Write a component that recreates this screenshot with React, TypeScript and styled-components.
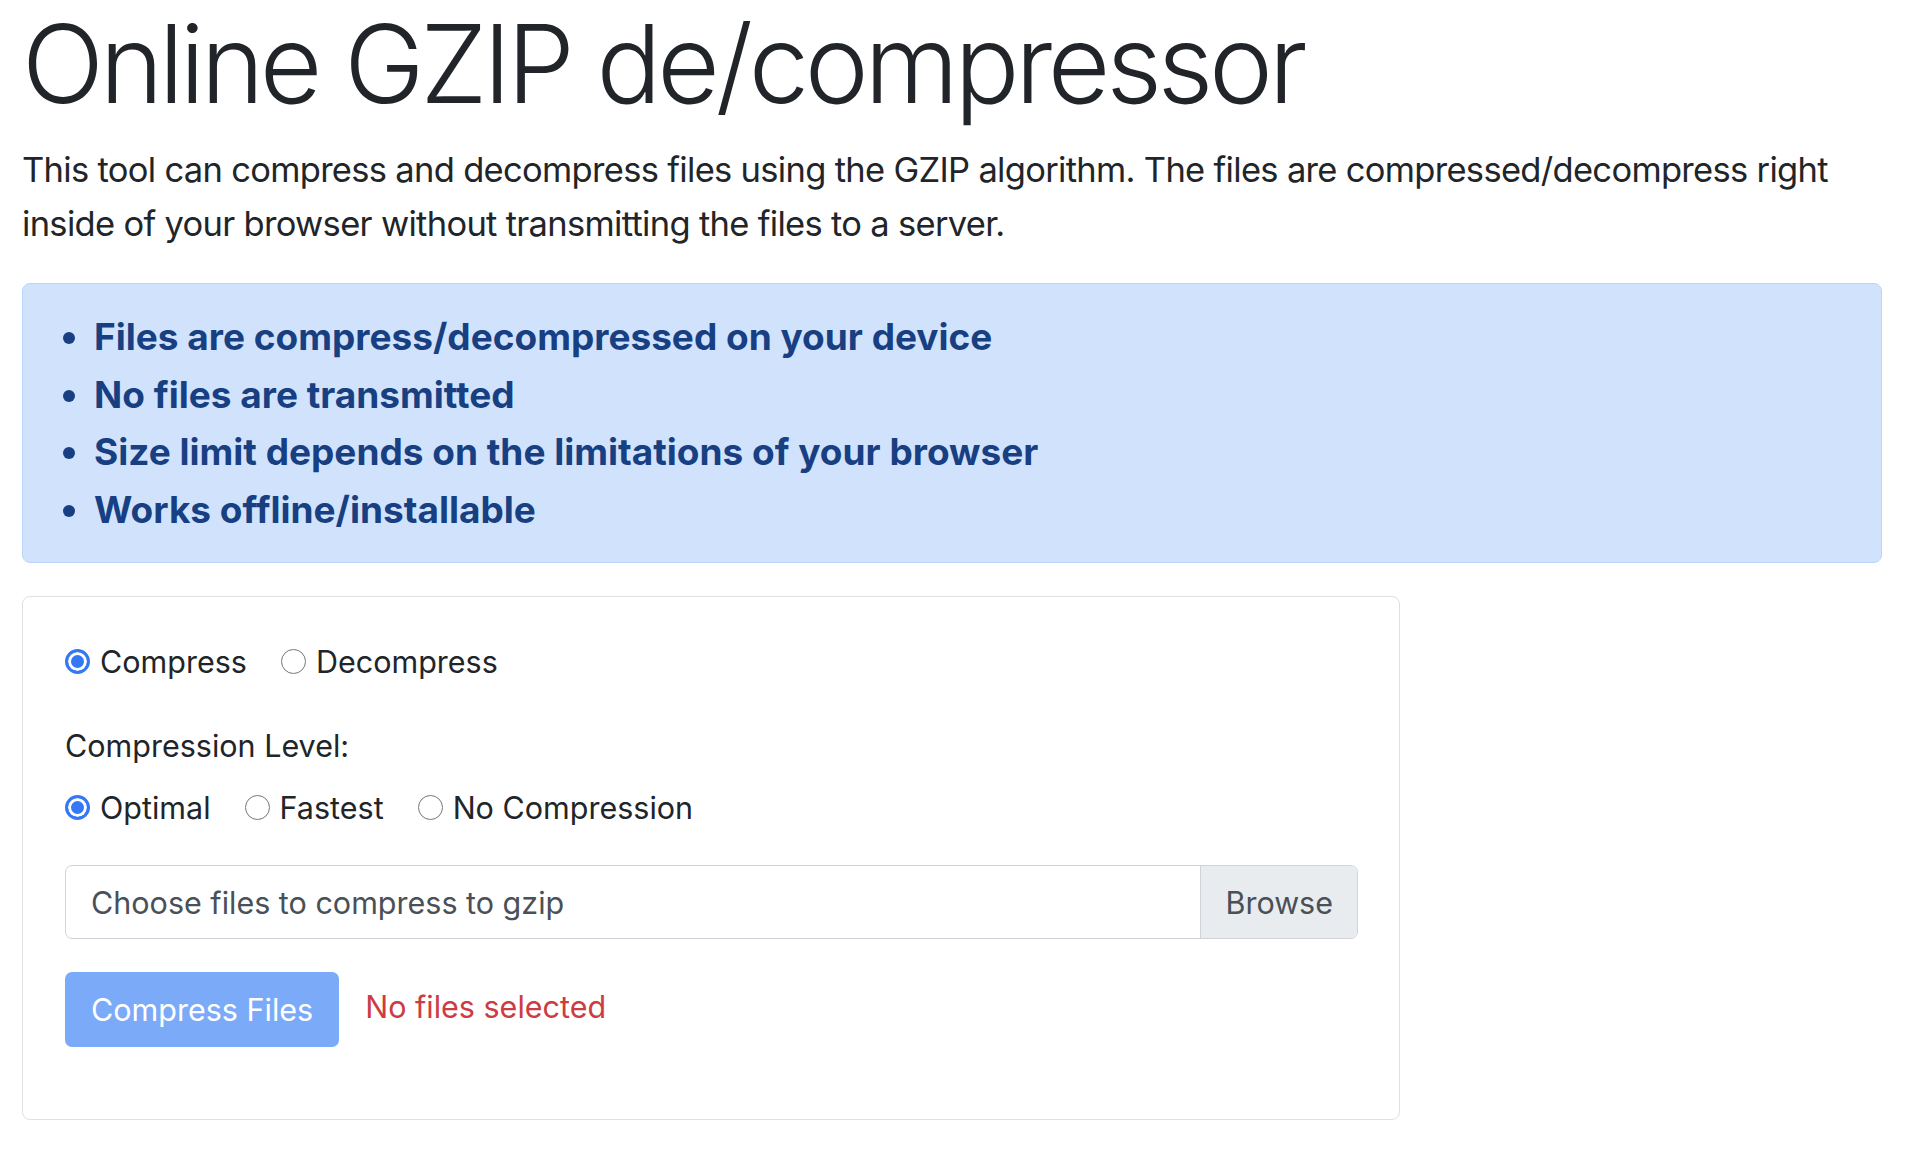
import React, { useState } from "react"
import styled, { createGlobalStyle } from "styled-components"

const GlobalStyle = createGlobalStyle`
	body {
		margin: 0;
		background: #fff;
		color: #212529;
		font-family: Inter, "Noto Sans", sans-serif;
	}
`

const Page = styled.main`
	width: 1860px;
	padding: 0 0 0 22px;
`

const Title = styled.h1`
	margin: -1px 0 0;
	font-size: 108px;
	font-weight: 300;
	line-height: 130px;
	letter-spacing: -0.04em;
`

const Lead = styled.p`
	margin: 14px 0 32px;
	font-size: 34.5px;
	line-height: 54px;
	letter-spacing: -0.02em;
`

const Alert = styled.div`
	box-sizing: border-box;
	padding: 24px 0;
	background: #d1e3fc;
	border: 1px solid #b9d5fb;
	border-radius: 8px;
	color: #173f82;
`

const FeatureList = styled.ul`
	margin: 0;
	padding-left: 71px;

	& > li {
		font-size: 37px;
		font-weight: 700;
		line-height: 57.5px;
	}
`

const Card = styled.section`
	box-sizing: border-box;
	width: 1378px;
	margin-top: 33px;
	padding: 43px 41px 72px 42px;
	border: 1px solid #dfe0e1;
	border-radius: 8px;
`

const RadioRow = styled.div<{ $gapTop?: number }>`
	display: flex;
	align-items: center;
	gap: 34px;
	height: 43px;
	margin-top: ${p => p.$gapTop ?? 0}px;
`

const Option = styled.label`
	display: flex;
	align-items: center;
	gap: 10px;
	font-size: 30.5px;
	cursor: pointer;
`

const Radio = styled.input.attrs({ type: "radio" })`
	appearance: none;
	box-sizing: border-box;
	width: 25px;
	height: 25px;
	margin: 0;
	border: 1.5px solid #777;
	border-radius: 50%;
	background: #fff;

	&:checked {
		border: 3px solid #3478f6;
		background: #3478f6;
		box-shadow: inset 0 0 0 3px #fff;
	}
`

const FieldLabel = styled.div`
	margin-top: 41px;
	font-size: 30.5px;
	line-height: 43px;
`

const FilePicker = styled.label`
	display: flex;
	height: 74px;
	margin-top: 36px;
	box-sizing: border-box;
	border: 1px solid #ced4da;
	border-radius: 7px;
	overflow: hidden;
	font-size: 30.5px;
	color: #495057;
	cursor: pointer;
`

const FileText = styled.span`
	flex: 1;
	display: flex;
	align-items: center;
	padding-left: 25px;
`

const Browse = styled.span`
	display: flex;
	align-items: center;
	padding: 0 24px;
	background: #e9ecef;
	border-left: 1px solid #ced4da;
`

const ActionRow = styled.div`
	display: flex;
	align-items: center;
	gap: 26px;
	margin-top: 33px;
`

const SubmitButton = styled.button`
	height: 75px;
	padding: 0 26px;
	border: none;
	border-radius: 7px;
	background: #7aaaf8;
	color: #fff;
	font-family: inherit;
	font-size: 30.5px;
`

const Status = styled.span`
	margin-top: -6px;
	color: #cd3b43;
	font-size: 30.5px;
`

export default function App() {
	const [mode, setMode] = useState("compress")
	const [level, setLevel] = useState("optimal")

	return (
		<Page>
			<GlobalStyle />
			<Title>Online GZIP de/compressor</Title>
			<Lead>
				This tool can compress and decompress files using the GZIP
				algorithm. The files are compressed/decompress right inside of
				your browser without transmitting the files to a server.
			</Lead>
			<Alert>
				<FeatureList>
					<li>Files are compress/decompressed on your device</li>
					<li>No files are transmitted</li>
					<li>Size limit depends on the limitations of your browser</li>
					<li>Works offline/installable</li>
				</FeatureList>
			</Alert>
			<Card>
				<RadioRow>
					<Option>
						<Radio
							name="mode"
							checked={mode === "compress"}
							onChange={() => setMode("compress")}
						/>
						Compress
					</Option>
					<Option>
						<Radio
							name="mode"
							checked={mode === "decompress"}
							onChange={() => setMode("decompress")}
						/>
						Decompress
					</Option>
				</RadioRow>
				<FieldLabel>Compression Level:</FieldLabel>
				<RadioRow $gapTop={19}>
					<Option>
						<Radio
							name="level"
							checked={level === "optimal"}
							onChange={() => setLevel("optimal")}
						/>
						Optimal
					</Option>
					<Option>
						<Radio
							name="level"
							checked={level === "fastest"}
							onChange={() => setLevel("fastest")}
						/>
						Fastest
					</Option>
					<Option>
						<Radio
							name="level"
							checked={level === "none"}
							onChange={() => setLevel("none")}
						/>
						No Compression
					</Option>
				</RadioRow>
				<FilePicker>
					<FileText>Choose files to compress to gzip</FileText>
					<Browse>Browse</Browse>
				</FilePicker>
				<ActionRow>
					<SubmitButton disabled>Compress Files</SubmitButton>
					<Status>No files selected</Status>
				</ActionRow>
			</Card>
		</Page>
	)
}
